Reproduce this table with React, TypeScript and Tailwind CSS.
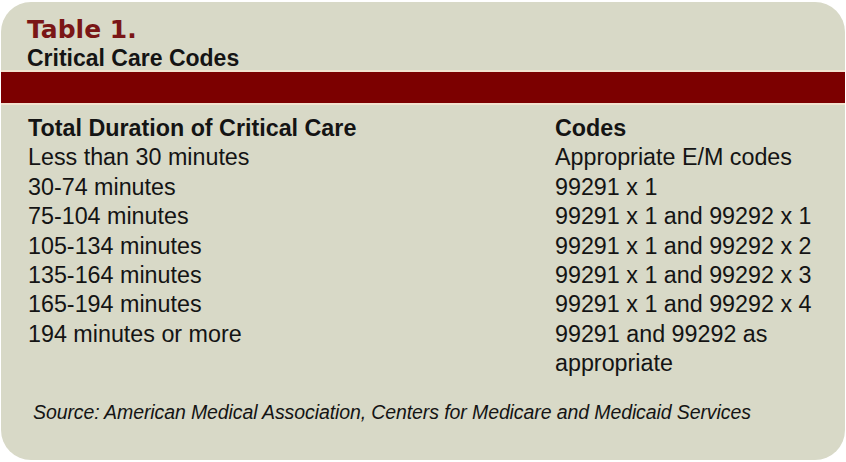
import React from 'react';

const rows: [string, string[]][] = [
    ['Less than 30 minutes', ['Appropriate E/M codes']],
    ['30-74 minutes', ['99291 x 1']],
    ['75-104 minutes', ['99291 x 1 and 99292 x 1']],
    ['105-134 minutes', ['99291 x 1 and 99292 x 2']],
    ['135-164 minutes', ['99291 x 1 and 99292 x 3']],
    ['165-194 minutes', ['99291 x 1 and 99292 x 4']],
    ['194 minutes or more', ['99291 and 99292 as', 'appropriate']],
];

const App: React.FC = () => {
    return (
        <div className="w-[846px] h-[462px] bg-white pl-[1px] pt-[2px] font-['Liberation_Sans',Arial,sans-serif]">
            <div className="h-[458px] w-[844px] rounded-[30px] bg-[#d8d9c7] overflow-hidden flex flex-col">
                {/* Header */}
                <div className="pl-[26px] pt-[14px] h-[68px]">
                    <div className="font-['DejaVu_Sans',sans-serif] text-[25px] leading-[28px] font-bold text-[#7a1616]">Table 1.</div>
                    <div className="text-[23px] leading-[26px] font-bold text-[#141414] mt-[1px]">Critical Care Codes</div>
                </div>
                <div className="h-[2px] bg-[#f2e2cf]" />
                <div className="h-[31px] bg-[#7c0000]" />
                <div className="h-[2px] bg-[#f2e2cf]" />

                {/* Table */}
                <div className="flex pt-[9px] text-[23.3px] leading-[29.4px] text-[#141414]">
                    <div className="w-[554px] pl-[27px]">
                        <div className="font-bold">Total Duration of Critical Care</div>
                        {rows.map(([d]) => (
                            <div key={d}>{d}</div>
                        ))}
                    </div>
                    <div>
                        <div className="font-bold">Codes</div>
                        {rows.map(([d, codes]) =>
                            codes.map((c) => <div key={d + c}>{c}</div>)
                        )}
                    </div>
                </div>

                <div className="pl-[32px] pt-[19px] text-[19.5px] italic text-[#141414] tracking-[-0.1px]">
                    Source: American Medical Association, Centers for Medicare and Medicaid Services
                </div>
            </div>
        </div>
    );
};

export default App;
